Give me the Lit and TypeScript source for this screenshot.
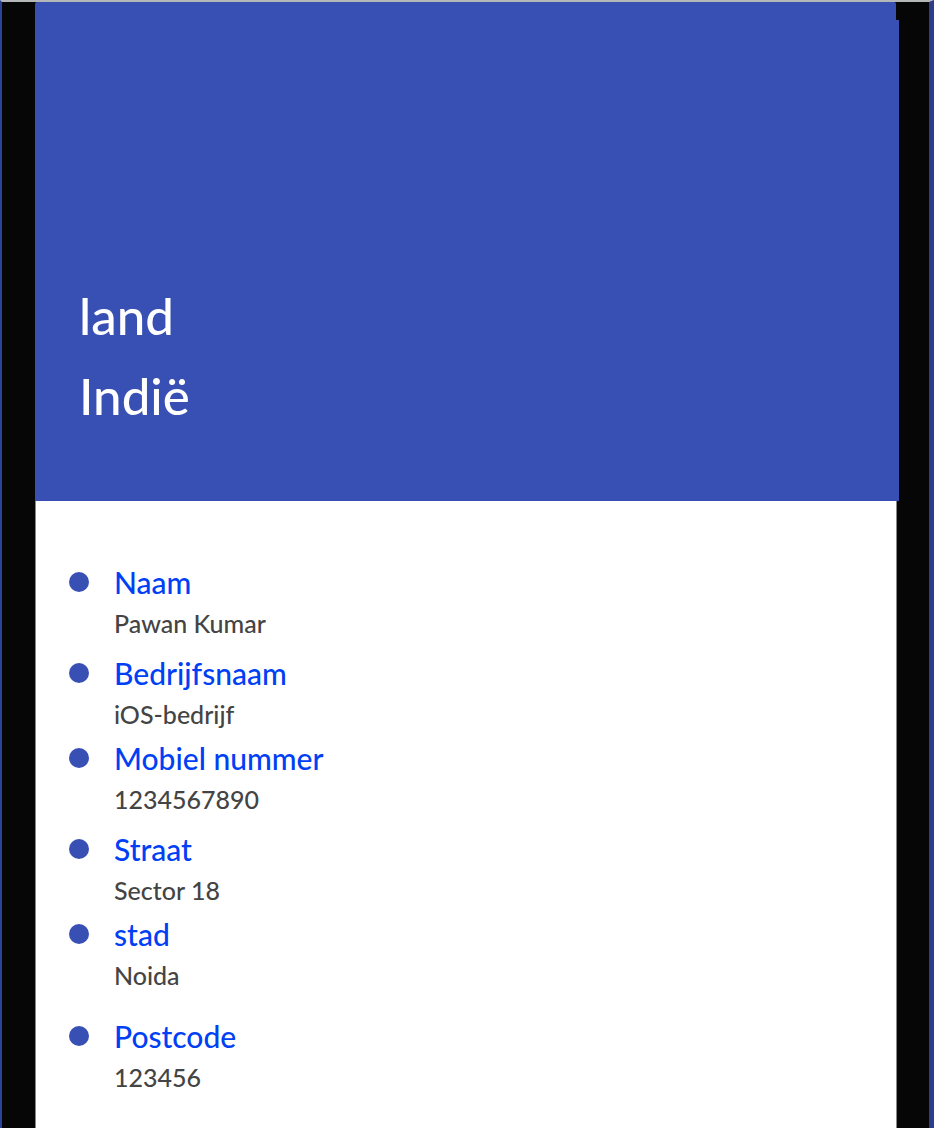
import { LitElement, html, css } from "lit";
import { customElement } from "lit/decorators.js";
import { classMap } from "lit/directives/class-map.js";

type Space = "tight" | "normal" | "loose";

interface Field {
  label: string;
  value: string;
  space: Space;
}

const FIELDS: Field[] = [
  { label: "Naam", value: "Pawan Kumar", space: "normal" },
  { label: "Bedrijfsnaam", value: "iOS-bedrijf", space: "tight" },
  { label: "Mobiel nummer", value: "1234567890", space: "normal" },
  { label: "Straat", value: "Sector 18", space: "tight" },
  { label: "stad", value: "Noida", space: "loose" },
  { label: "Postcode", value: "123456", space: "normal" },
];

@customElement("app-root")
export class AppRoot extends LitElement {
  static styles = css`
    :host {
      display: block;
      font-family: Lato, "Noto Sans", sans-serif;
      font-weight: 500;
    }
    .device {
      box-sizing: border-box;
      display: flex;
      min-height: 100vh;
      padding: 0 32px 0 33px;
      background: #060606;
      border: solid #2a4498;
      border-width: 2px 5px 0 2px;
      border-top-color: #b4b8b8;
      border-right-color: #2b3d8c;
    }
    .screen {
      flex: 1;
      min-width: 0;
      box-sizing: border-box;
    }
    .status {
      height: 18px;
      margin-right: 1px;
      background: #3850b4;
      border-radius: 2px 2px 0 0;
    }
    .hero {
      box-sizing: border-box;
      margin-right: -2px;
      padding: 256px 44px 65px;
      background: #3850b4;
      color: #fff;
      font-size: 51px;
      line-height: 80px;
    }
    .hero h1,
    .hero p {
      margin: 0;
      font: inherit;
    }
    .fields {
      box-sizing: border-box;
      min-height: calc(100vh - 501px);
      margin: 0;
      padding: 59px 33px 20px;
      background: #fff;
      border: solid #888;
      border-width: 0 1px;
    }
    .field {
      display: grid;
      grid-template-columns: 20px 1fr;
      column-gap: 25px;
      align-items: center;
    }
    .tight {
      margin-bottom: 2px;
    }
    .normal {
      margin-bottom: 8px;
    }
    .loose {
      margin-bottom: 19px;
    }
    .dot {
      width: 20px;
      height: 20px;
      border-radius: 50%;
      background: #3850b4;
    }
    .label {
      color: #0040f5;
      font-size: 30px;
      line-height: 44px;
    }
    .value {
      grid-column: 2;
      margin: 0;
      color: #444;
      font-size: 25px;
      line-height: 39px;
    }
  `;

  render() {
    return html`
      <div class="device">
        <main class="screen">
          <div class="status"></div>
          <header class="hero">
            <h1>land</h1>
            <p>Indië</p>
          </header>
          <dl class="fields">
            ${FIELDS.map(
              (f) => html`
                <div class=${classMap({ field: true, [f.space]: true })}>
                  <span class="dot" aria-hidden="true"></span>
                  <dt class="label">${f.label}</dt>
                  <dd class="value">${f.value}</dd>
                </div>
              `
            )}
          </dl>
        </main>
      </div>
    `;
  }
}
